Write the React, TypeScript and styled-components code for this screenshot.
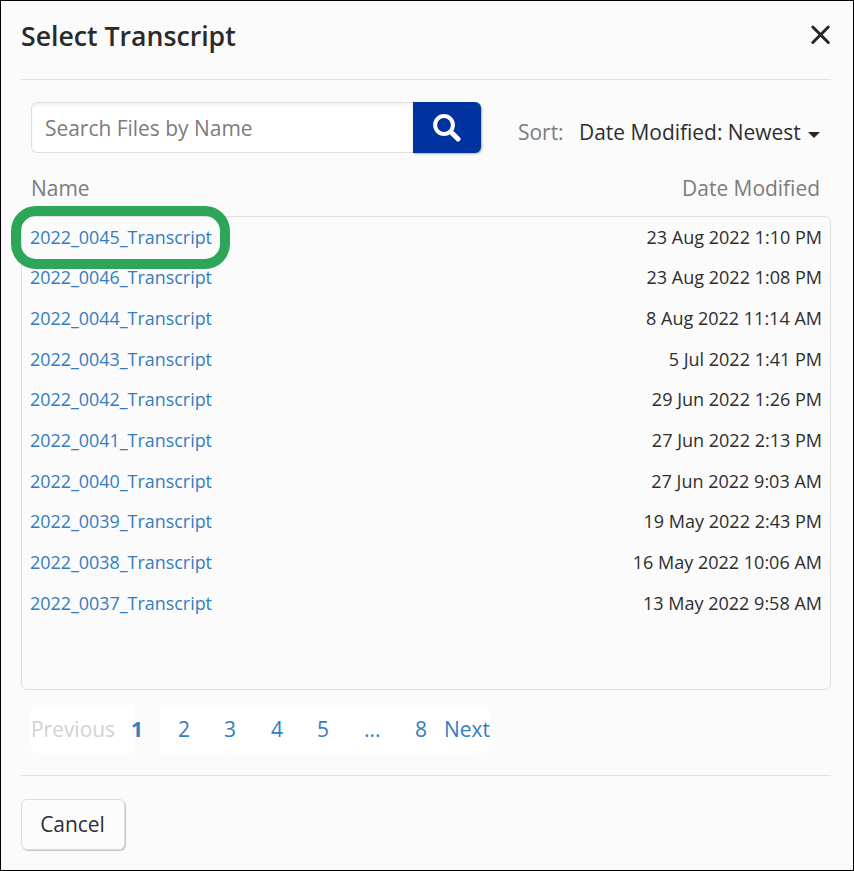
import React from "react";
import styled, { createGlobalStyle } from "styled-components";

const GlobalStyle = createGlobalStyle`
  * { box-sizing: border-box; }
  body { margin: 0; }
  button, input { font: inherit; margin: 0; }
`;

const Dialog = styled.div`
  width: 854px;
  height: 871px;
  border: 1px solid #000;
  background: #fbfbfb;
  padding: 0 22px 0 20px;
  display: flex;
  flex-direction: column;
  font-family: "Open Sans", "Noto Sans", sans-serif;
  font-size: 20.95px;
  line-height: 30px;
  color: #2e2e2e;
`;

const Header = styled.header`
  height: 79px;
  flex: none;
  display: flex;
  justify-content: space-between;
  border-bottom: 1px solid #e0e0e0;
`;

const Title = styled.h1`
  margin: 16px 0 0;
  font-size: 26.67px;
  line-height: 38px;
  font-weight: 600;
  color: #2a2a2a;
`;

const CloseButton = styled.button`
  border: 0;
  padding: 0;
  background: none;
  width: 21px;
  height: 21px;
  margin-top: 23px;
  svg { display: block; }
`;

const Toolbar = styled.div`
  display: flex;
  height: 51px;
  margin: 22px 10px 0;
  flex: none;
`;

const SearchInput = styled.input`
  width: 382px;
  flex: none;
  border: 1px solid #e0e0e0;
  border-right: 0;
  border-radius: 6px 0 0 6px;
  background: #fff;
  padding: 0 13px 0 13px;
  box-shadow: inset 0 2px 4px rgba(0, 0, 0, 0.06);
  color: #262626;
  outline: 0;
  &::placeholder { color: #7c7c7c; opacity: 1; }
`;

const SearchButton = styled.button`
  width: 68px;
  flex: none;
  border: 0;
  padding: 0;
  border-radius: 0 6px 6px 0;
  background: #0033a0;
  box-shadow: 1px 1px 2px rgba(0, 0, 0, 0.3);
  display: flex;
  align-items: center;
  justify-content: center;
`;

const Sort = styled.div`
  display: flex;
  flex: none;
  align-items: flex-start;
  margin-left: 37px;
  padding-top: 15px;
  white-space: nowrap;
`;

const SortLabel = styled.span`
  width: 61px;
  color: #7c7c7c;
`;

const Caret = styled.span`
  margin: 15px 0 0 7px;
  border: 6px solid transparent;
  border-top-color: #262626;
  border-bottom: 0;
`;

const ColumnHeads = styled.div`
  display: flex;
  justify-content: space-between;
  margin: 20px 11px 0 10px;
  height: 43px;
  flex: none;
  color: #7c7c7c;
`;

const FileList = styled.ul`
  list-style: none;
  margin: 0;
  padding: 0 8px;
  height: 474px;
  flex: none;
  border: 1px solid #e0e0e0;
  border-radius: 6px;
`;

const FileRow = styled.li`
  display: flex;
  justify-content: space-between;
  height: 40.67px;
  font-size: 18.03px;
  line-height: 40.67px;
  &:first-child { margin-top: -0.4px; }
`;

const FileLink = styled.a`
  position: relative;
  font-size: 17.92px;
  color: #337dc0;
  text-decoration: none;
`;

const Highlight = styled.span`
  position: absolute;
  left: -19px;
  top: -10.6px;
  width: 219px;
  height: 63px;
  border: 10px solid #2ea65a;
  border-radius: 25px;
`;

const Pager = styled.nav`
  display: flex;
  margin: 15px 0 0 10px;
  height: 48px;
  line-height: 48px;
  flex: none;
`;

const PageItem = styled.a<{ $width: number; $pad?: number; $state?: "disabled" | "current" }>`
  width: ${(p) => p.$width}px;
  padding-left: ${(p) => p.$pad ?? 0}px;
  white-space: nowrap;
  background: ${(p) => (p.$state === "current" ? "transparent" : "#fff")};
  color: ${(p) => (p.$state === "disabled" ? "#d2d2d2" : "#337dc0")};
  font-weight: ${(p) => (p.$state === "current" ? 700 : 400)};
  &:first-child { border-radius: 6px 0 0 6px; }
  &:last-child { border-radius: 0 6px 6px 0; }
`;

const Current = styled.span`
  margin-left: -2px;
`;

const Footer = styled.footer`
  margin-top: 22px;
  padding-top: 23px;
  border-top: 1px solid #e0e0e0;
`;

const CancelButton = styled.button`
  display: block;
  width: 104px;
  height: 51px;
  padding: 0 1px 2px 0;
  border: 1px solid #dedede;
  border-radius: 6px;
  background: #fcfcfc;
  box-shadow: 1px 1px 1px rgba(0, 0, 0, 0.22);
  color: inherit;
`;

const files = [
  ["0045", "23 Aug 2022 1:10 PM"],
  ["0046", "23 Aug 2022 1:08 PM"],
  ["0044", "8 Aug 2022 11:14 AM"],
  ["0043", "5 Jul 2022 1:41 PM"],
  ["0042", "29 Jun 2022 1:26 PM"],
  ["0041", "27 Jun 2022 2:13 PM"],
  ["0040", "27 Jun 2022 9:03 AM"],
  ["0039", "19 May 2022 2:43 PM"],
  ["0038", "16 May 2022 10:06 AM"],
  ["0037", "13 May 2022 9:58 AM"],
];

export default function App() {
  return (
    <>
      <GlobalStyle />
      <Dialog role="dialog">
        <Header>
          <Title>Select Transcript</Title>
          <CloseButton aria-label="Close">
            <svg width="21" height="21" viewBox="0 0 21 21" fill="none" stroke="#262626" strokeWidth="3" strokeLinecap="round">
              <path d="M2.8 3L18.3 18.5M18.3 3L2.8 18.5" />
            </svg>
          </CloseButton>
        </Header>
        <Toolbar>
          <SearchInput placeholder="Search Files by Name" />
          <SearchButton aria-label="Search">
            <svg width="28" height="28" viewBox="0 0 28 28" fill="none" stroke="#fff">
              <circle cx="11" cy="11" r="8.9" strokeWidth="4" />
              <path d="M17.5 17.5L19 19" strokeWidth="4" />
              <path d="M19.5 19.5L25 25" strokeWidth="5" strokeLinecap="round" />
            </svg>
          </SearchButton>
          <Sort>
            <SortLabel>Sort:</SortLabel>
            <span>Date Modified: Newest</span>
            <Caret />
          </Sort>
        </Toolbar>
        <ColumnHeads>
          <span>Name</span>
          <span>Date Modified</span>
        </ColumnHeads>
        <FileList>
          {files.map(([id, date], i) => (
            <FileRow key={id}>
              <FileLink>
                {`2022_${id}_Transcript`}
                {i === 0 && <Highlight />}
              </FileLink>
              <span>{date}</span>
            </FileRow>
          ))}
        </FileList>
        <Pager>
          <PageItem $width={102} $state="disabled">Previous</PageItem>
          <PageItem $width={27} $state="current"><Current>1</Current></PageItem>
          <PageItem $width={46} $pad={18}>2</PageItem>
          <PageItem $width={47} $pad={18}>3</PageItem>
          <PageItem $width={47} $pad={18}>4</PageItem>
          <PageItem $width={48} $pad={17}>5</PageItem>
          <PageItem $width={49} $pad={16}>...</PageItem>
          <PageItem $width={46} $pad={18}>8</PageItem>
          <PageItem $width={46} $pad={1}>Next</PageItem>
        </Pager>
        <Footer>
          <CancelButton>Cancel</CancelButton>
        </Footer>
      </Dialog>
    </>
  );
}
